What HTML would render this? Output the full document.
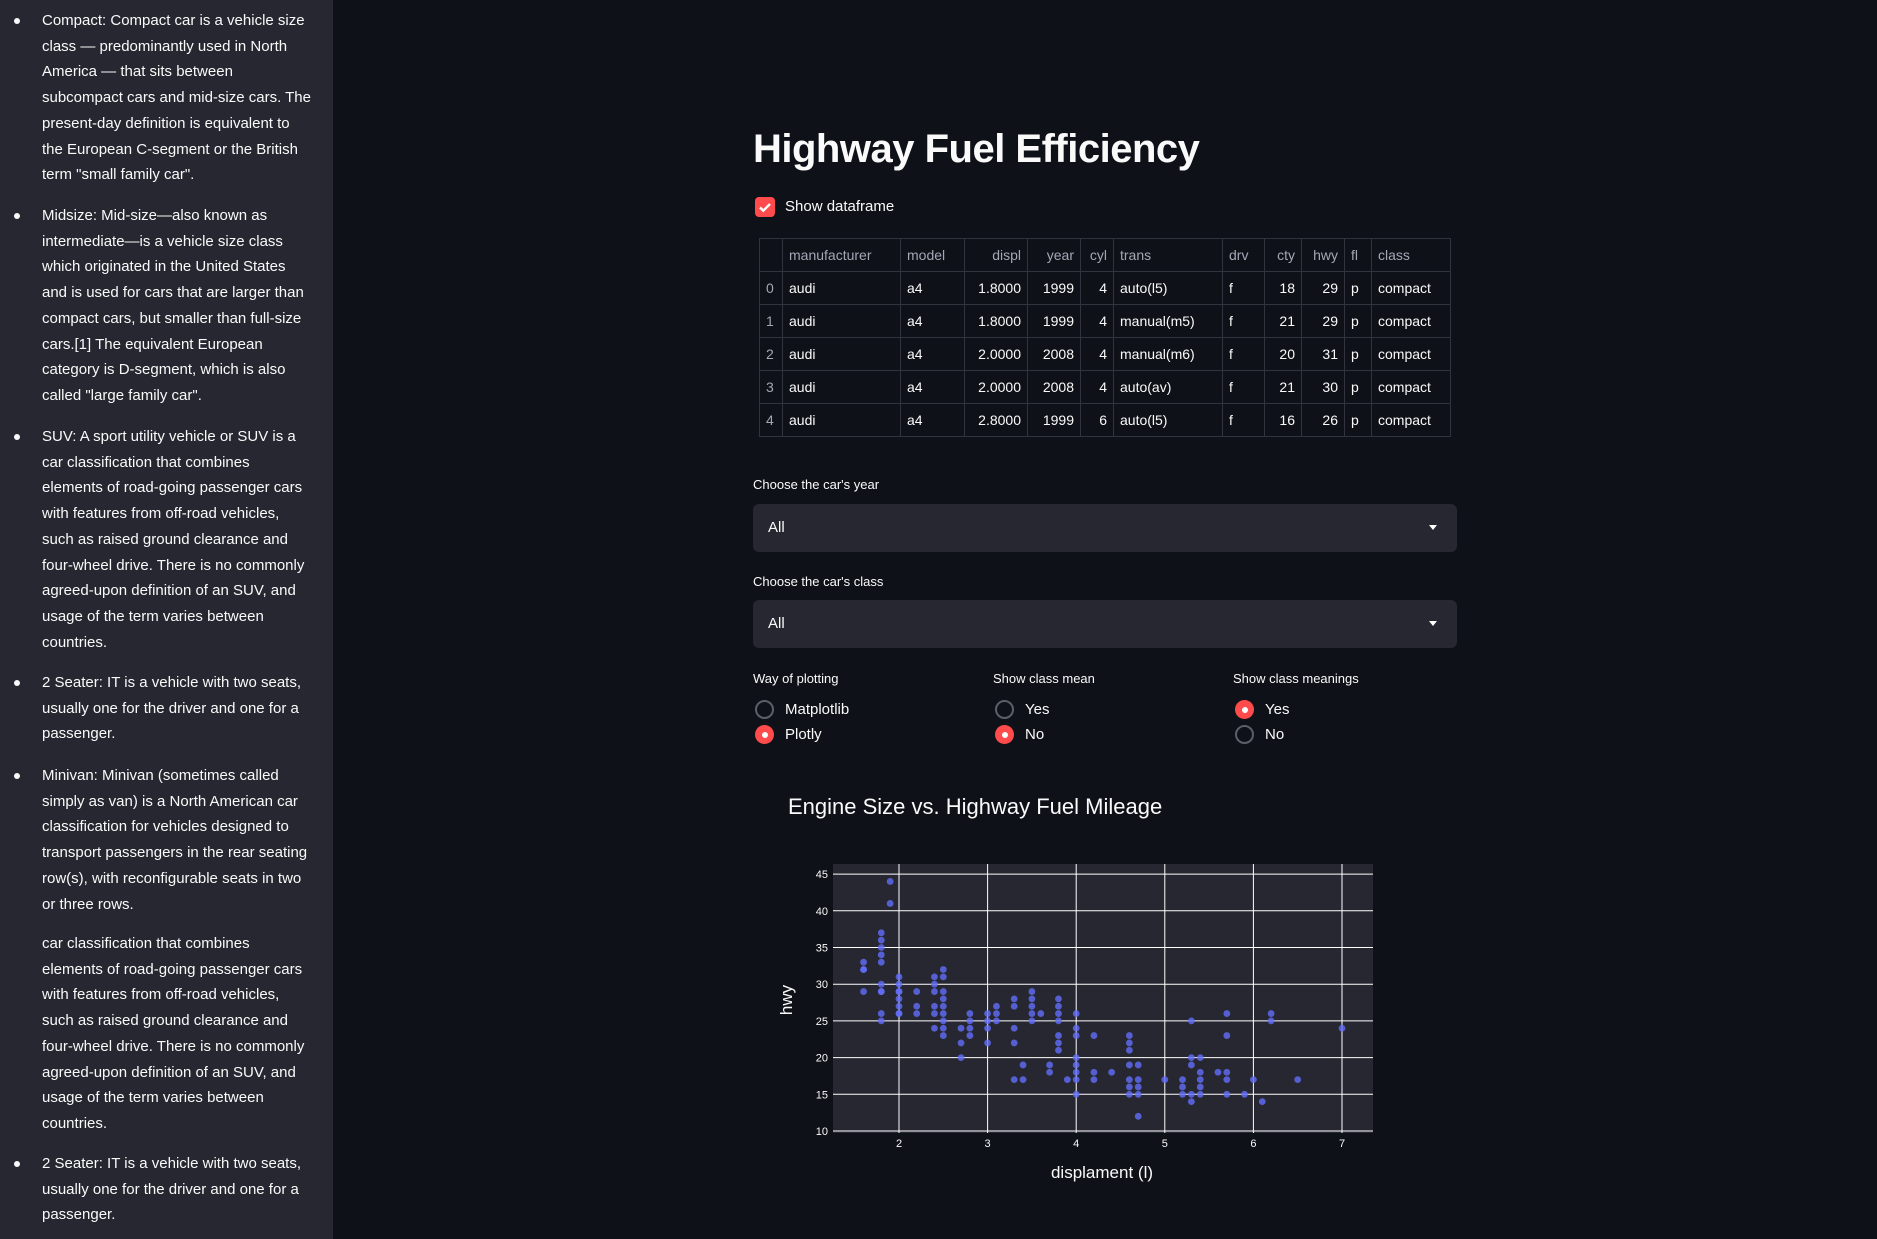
<!DOCTYPE html>
<html><head><meta charset="utf-8">
<style>
*{margin:0;padding:0;box-sizing:border-box}
html,body{width:1877px;height:1239px;overflow:hidden;background:#0e1117;font-family:"Liberation Sans",sans-serif;color:#fafafa}
#side{position:absolute;left:0;top:0;width:333px;height:1239px;background:#262730}
#side .ln{position:absolute;left:42px;font-size:15px;white-space:nowrap;line-height:20px}
#side .b{position:absolute;left:14px;width:6px;height:6px;border-radius:50%;background:#fafafa}
.abs{position:absolute}
h1{position:absolute;left:753px;top:127px;font-size:40px;font-weight:bold;letter-spacing:-0.5px}
table{position:absolute;left:759px;top:238px;border-collapse:collapse;font-size:14px;table-layout:fixed}
td,th{border:1px solid #31333f;height:33px;padding:0 6px;font-weight:normal;white-space:nowrap}
th{color:#a3a8b4;text-align:left}
td.i{color:#a3a8b4}
.r{text-align:right !important}
.lab{position:absolute;font-size:13px;color:#fafafa}
.sel{position:absolute;left:753px;width:704px;height:48px;background:#262730;border-radius:6px;font-size:15px}
.sel span{position:absolute;left:15px;top:15px}
.sel i{position:absolute;right:20px;top:21px;width:0;height:0;border-left:4px solid transparent;border-right:4px solid transparent;border-top:5px solid #fff}
.rad{position:absolute;width:19px;height:19px;border-radius:50%;border:2px solid #5c5e68}
.rad.on{border:none;background:#ff4b4b}
.rad.on:after{content:"";position:absolute;left:6.5px;top:6.5px;width:6px;height:6px;border-radius:50%;background:#fff}
.rl{position:absolute;font-size:15px}
</style></head><body>
<div id="side"></div>

<h1>Highway Fuel Efficiency</h1>
<div class="abs" style="left:755px;top:197px;width:20px;height:20px;background:#ff4b4b;border-radius:4px">
<svg width="20" height="20" viewBox="0 0 20 20"><path d="M5 10.5l3.2 3.2L15 7" stroke="#fff" stroke-width="2.4" fill="none"/></svg></div>
<div class="abs" style="left:785px;top:198px;font-size:15px">Show dataframe</div>

<table>
<colgroup><col style="width:23px"><col style="width:118px"><col style="width:64px"><col style="width:63px"><col style="width:53px"><col style="width:33px"><col style="width:109px"><col style="width:42px"><col style="width:37px"><col style="width:43px"><col style="width:27px"><col style="width:79px"></colgroup>
<tr><th></th><th>manufacturer</th><th>model</th><th class="r">displ</th><th class="r">year</th><th class="r">cyl</th><th>trans</th><th>drv</th><th class="r">cty</th><th class="r">hwy</th><th>fl</th><th>class</th></tr>
<tr><td class="i">0</td><td>audi</td><td>a4</td><td class="r">1.8000</td><td class="r">1999</td><td class="r">4</td><td>auto(l5)</td><td>f</td><td class="r">18</td><td class="r">29</td><td>p</td><td>compact</td></tr>
<tr><td class="i">1</td><td>audi</td><td>a4</td><td class="r">1.8000</td><td class="r">1999</td><td class="r">4</td><td>manual(m5)</td><td>f</td><td class="r">21</td><td class="r">29</td><td>p</td><td>compact</td></tr>
<tr><td class="i">2</td><td>audi</td><td>a4</td><td class="r">2.0000</td><td class="r">2008</td><td class="r">4</td><td>manual(m6)</td><td>f</td><td class="r">20</td><td class="r">31</td><td>p</td><td>compact</td></tr>
<tr><td class="i">3</td><td>audi</td><td>a4</td><td class="r">2.0000</td><td class="r">2008</td><td class="r">4</td><td>auto(av)</td><td>f</td><td class="r">21</td><td class="r">30</td><td>p</td><td>compact</td></tr>
<tr><td class="i">4</td><td>audi</td><td>a4</td><td class="r">2.8000</td><td class="r">1999</td><td class="r">6</td><td>auto(l5)</td><td>f</td><td class="r">16</td><td class="r">26</td><td>p</td><td>compact</td></tr>
</table>

<div class="lab" style="left:753px;top:477px">Choose the car's year</div>
<div class="sel" style="top:504px"><span>All</span><i></i></div>
<div class="lab" style="left:753px;top:574px">Choose the car's class</div>
<div class="sel" style="top:600px"><span>All</span><i></i></div>

<div class="lab" style="left:753px;top:671px">Way of plotting</div>
<div class="lab" style="left:993px;top:671px">Show class mean</div>
<div class="lab" style="left:1233px;top:671px">Show class meanings</div>
<div class="rad" style="left:755px;top:700px"></div><div class="rl" style="left:785px;top:701px">Matplotlib</div>
<div class="rad on" style="left:755px;top:725px"></div><div class="rl" style="left:785px;top:726px">Plotly</div>
<div class="rad" style="left:995px;top:700px"></div><div class="rl" style="left:1025px;top:701px">Yes</div>
<div class="rad on" style="left:995px;top:725px"></div><div class="rl" style="left:1025px;top:726px">No</div>
<div class="rad on" style="left:1235px;top:700px"></div><div class="rl" style="left:1265px;top:701px">Yes</div>
<div class="rad" style="left:1235px;top:725px"></div><div class="rl" style="left:1265px;top:726px">No</div>

<svg id="plot" class="abs" style="left:0;top:0" width="1877" height="1239" font-family="Liberation Sans, sans-serif">
<text x="788" y="814" font-size="22" fill="#fafafa">Engine Size vs. Highway Fuel Mileage</text>
<rect x="833" y="864" width="540" height="269" fill="#262730"/>
<g id="grid"></g><g id="pts"></g>
<text x="1102" y="1178" font-size="17" fill="#fafafa" text-anchor="middle">displament (l)</text>
<text transform="translate(792,1000) rotate(-90)" font-size="17" fill="#fafafa" text-anchor="middle">hwy</text>
</svg>

<script>
var side=document.getElementById('side');
var items=[
[21,["Compact: Compact car is a vehicle size","class — predominantly used in North","America — that sits between","subcompact cars and mid-size cars. The","present-day definition is equivalent to","the European C-segment or the British","term \"small family car\"."],1],
[216,["Midsize: Mid-size—also known as","intermediate—is a vehicle size class","which originated in the United States","and is used for cars that are larger than","compact cars, but smaller than full-size","cars.[1] The equivalent European","category is D-segment, which is also","called \"large family car\"."],1],
[437,["SUV: A sport utility vehicle or SUV is a","car classification that combines","elements of road-going passenger cars","with features from off-road vehicles,","such as raised ground clearance and","four-wheel drive. There is no commonly","agreed-upon definition of an SUV, and","usage of the term varies between","countries."],1],
[683,["2 Seater: IT is a vehicle with two seats,","usually one for the driver and one for a","passenger."],1],
[776,["Minivan: Minivan (sometimes called","simply as van) is a North American car","classification for vehicles designed to","transport passengers in the rear seating","row(s), with reconfigurable seats in two","or three rows."],1],
[944,["car classification that combines","elements of road-going passenger cars","with features from off-road vehicles,","such as raised ground clearance and","four-wheel drive. There is no commonly","agreed-upon definition of an SUV, and","usage of the term varies between","countries."],0],
[1164,["2 Seater: IT is a vehicle with two seats,","usually one for the driver and one for a","passenger."],1]];
var h='';
items.forEach(function(it){var y=it[0];
 if(it[2])h+='<div class="b" style="top:'+(y-3)+'px"></div>';
 it[1].forEach(function(t,i){h+='<div class="ln" style="top:'+(y+i*25.7-10)+'px">'+t+'</div>';});});
side.innerHTML=h;

function X(v){return 899+(v-2)*88.6}
function Y(v){return 1131-(v-10)*7.34}
var g='';
for(var v=10;v<=45;v+=5){var y=Y(v);g+='<line x1="833" x2="1373" y1="'+y+'" y2="'+y+'" stroke="#fff" stroke-width="1"/><text x="828" y="'+(y+4)+'" font-size="11" fill="#fafafa" text-anchor="end">'+v+'</text>';}
for(var v=2;v<=7;v++){var x=X(v);g+='<line y1="864" y2="1133" x1="'+x+'" x2="'+x+'" stroke="#fff" stroke-width="1"/><text x="'+x+'" y="1147" font-size="11" fill="#fafafa" text-anchor="middle">'+v+'</text>';}
document.getElementById('grid').innerHTML=g;
var d={1.6:[33,32,32,29],1.8:[37,36,35,34,33,30,29,29,26,25],1.9:[44,41],2.0:[31,30,29,29,28,27,26,26],2.2:[29,27,26],2.4:[31,30,29,27,26,24],2.5:[32,31,29,28,27,26,25,24,23],2.7:[24,22,20],2.8:[26,25,24,23],3.0:[26,25,24,22],3.1:[27,26,25],3.3:[28,27,24,22,17],3.4:[19,17],3.5:[29,28,27,26,25],3.6:[26],3.7:[19,18],3.8:[28,27,26,25,23,22,21],3.9:[17],4.0:[26,24,23,20,19,18,17,15],4.2:[23,18,17],4.4:[18],4.6:[23,22,21,19,17,16,15],4.7:[19,17,16,15,12],5.0:[17],5.2:[17,16,15],5.3:[25,20,19,15,14],5.4:[20,18,17,16,15],5.6:[18],5.7:[26,23,18,17,15],5.9:[15],6.0:[17],6.1:[14],6.2:[26,25],6.5:[17],7.0:[24]};
var p='';
for(var k in d){d[k].forEach(function(v){p+='<circle cx="'+X(+k)+'" cy="'+Y(v)+'" r="3.4" fill="#636efa" fill-opacity="0.8"/>';});}
document.getElementById('pts').innerHTML=p;
</script>
</body></html>
